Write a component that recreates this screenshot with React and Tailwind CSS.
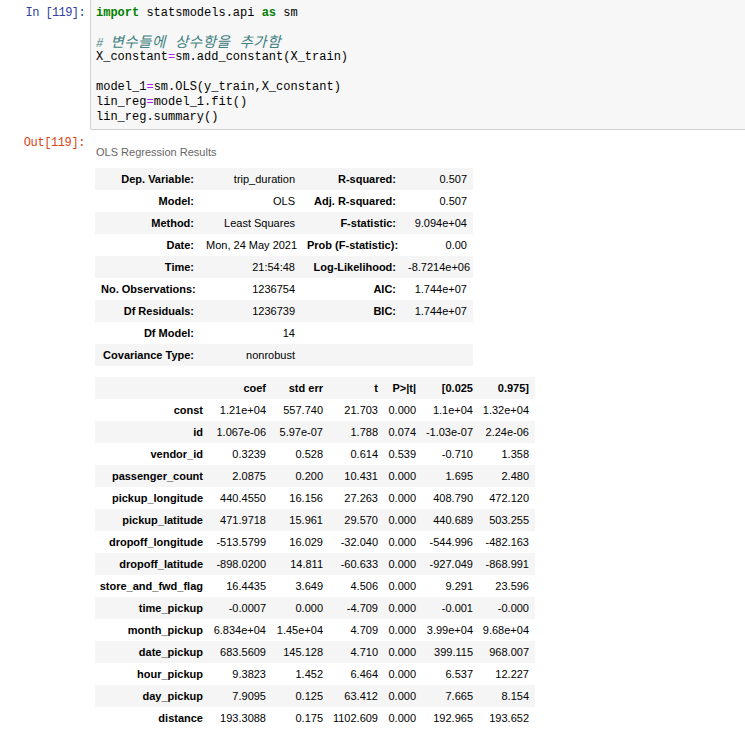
import React from 'react';

const mono = { fontFamily: '"Liberation Mono", "Noto Sans CJK KR", monospace' };

const SUMMARY = [
  ['Dep. Variable:', 'trip_duration', 'R-squared:', '0.507'],
  ['Model:', 'OLS', 'Adj. R-squared:', '0.507'],
  ['Method:', 'Least Squares', 'F-statistic:', '9.094e+04'],
  ['Date:', 'Mon, 24 May 2021', 'Prob (F-statistic):', '0.00'],
  ['Time:', '21:54:48', 'Log-Likelihood:', '-8.7214e+06'],
  ['No. Observations:', '1236754', 'AIC:', '1.744e+07'],
  ['Df Residuals:', '1236739', 'BIC:', '1.744e+07'],
  ['Df Model:', '14', '', ''],
  ['Covariance Type:', 'nonrobust', '', ''],
];

const COEF_HEAD = ['', 'coef', 'std err', 't', 'P>|t|', '[0.025', '0.975]'];

const COEFS = [
  ['const', '1.21e+04', '557.740', '21.703', '0.000', '1.1e+04', '1.32e+04'],
  ['id', '1.067e-06', '5.97e-07', '1.788', '0.074', '-1.03e-07', '2.24e-06'],
  ['vendor_id', '0.3239', '0.528', '0.614', '0.539', '-0.710', '1.358'],
  ['passenger_count', '2.0875', '0.200', '10.431', '0.000', '1.695', '2.480'],
  ['pickup_longitude', '440.4550', '16.156', '27.263', '0.000', '408.790', '472.120'],
  ['pickup_latitude', '471.9718', '15.961', '29.570', '0.000', '440.689', '503.255'],
  ['dropoff_longitude', '-513.5799', '16.029', '-32.040', '0.000', '-544.996', '-482.163'],
  ['dropoff_latitude', '-898.0200', '14.811', '-60.633', '0.000', '-927.049', '-868.991'],
  ['store_and_fwd_flag', '16.4435', '3.649', '4.506', '0.000', '9.291', '23.596'],
  ['time_pickup', '-0.0007', '0.000', '-4.709', '0.000', '-0.001', '-0.000'],
  ['month_pickup', '6.834e+04', '1.45e+04', '4.709', '0.000', '3.99e+04', '9.68e+04'],
  ['date_pickup', '683.5609', '145.128', '4.710', '0.000', '399.115', '968.007'],
  ['hour_pickup', '9.3823', '1.452', '6.464', '0.000', '6.537', '12.227'],
  ['day_pickup', '7.9095', '0.125', '63.412', '0.000', '7.665', '8.154'],
  ['distance', '193.3088', '0.175', '1102.609', '0.000', '192.965', '193.652'],
];

const SUM_W = ['w-[105px]', 'w-[101px]', 'w-[101px]', 'w-[71px]'];
const COEF_W = ['w-[114px]', 'w-[63px]', 'w-[57px]', 'w-[55px]', 'w-[38px]', 'w-[57px]', 'w-[56px]'];

const kw = 'text-[#008000] font-bold';
const op = 'text-[#aa22ff]';

function CodeLine({ children }) {
  return <div className="h-[14.8px] leading-[14.8px] whitespace-pre">{children}</div>;
}

export default function App() {
  return (
    <div className="w-[745px] h-[738px] overflow-hidden bg-white text-black" style={{ fontFamily: '"Liberation Sans", Arial, sans-serif' }}>
      {/* input cell */}
      <div className="flex">
        <div className="w-[90px] shrink-0 pr-[5px] pt-[6px] text-right text-[12px] tracking-[-0.6px] leading-[14.8px] text-[#303f9f]" style={mono}>
          In&nbsp;[119]:
        </div>
        <div className="w-[680px] shrink-0 -mt-px border border-[#cfcfcf] rounded-[2px] bg-[#f7f7f7] pl-[5px] pt-[6px] pb-[5px] text-[12px] text-black" style={mono}>
          <CodeLine><span className={kw}>import</span> statsmodels.api <span className={kw}>as</span> sm</CodeLine>
          <CodeLine> </CodeLine>
          <CodeLine>
            <span className="italic text-[#408080]"># <span className="text-[14.5px] leading-none tracking-[0.5px]">변수들에 상수항을 추가함</span></span>
          </CodeLine>
          <CodeLine>X_constant<span className={op}>=</span>sm.add_constant(X_train)</CodeLine>
          <CodeLine> </CodeLine>
          <CodeLine>model_1<span className={op}>=</span>sm.OLS(y_train,X_constant)</CodeLine>
          <CodeLine>lin_reg<span className={op}>=</span>model_1.fit()</CodeLine>
          <CodeLine>lin_reg.summary()</CodeLine>
        </div>
      </div>

      {/* output */}
      <div className="flex">
        <div className="w-[90px] shrink-0 pr-[5px] pt-[6px] text-right text-[12px] tracking-[-0.4px] leading-[14px] text-[#d84315]" style={mono}>
          Out[119]:
        </div>
        <div className="pl-[5px] pt-[15px] text-[11px]">
          <div className="leading-[14px] text-[#666] pl-px">OLS Regression Results</div>
          <table className="mt-[9px] table-fixed border-collapse w-[378px]">
            <tbody>
              {SUMMARY.map((r, i) => (
                <tr key={i} className={`h-[22px] ${i % 2 === 0 ? 'bg-[#f5f5f5]' : 'bg-white'}`}>
                  {r.map((c, j) => (
                    <td key={j} className={`${SUM_W[j]} pl-[6px] pr-[6px] text-right whitespace-nowrap leading-[22px] ${j % 2 === 0 ? 'font-bold' : ''}`}>
                      {c}
                    </td>
                  ))}
                </tr>
              ))}
            </tbody>
          </table>

          <table className="mt-[11px] table-fixed border-collapse w-[440px]">
            <tbody>
              <tr className="h-[22px] bg-[#f5f5f5]">
                {COEF_HEAD.map((h, j) => (
                  <td key={j} className={`${COEF_W[j]} pr-[6px] text-right font-bold whitespace-nowrap leading-[22px]`}>{h}</td>
                ))}
              </tr>
              {COEFS.map((r, i) => (
                <tr key={r[0]} className={`h-[22px] ${i % 2 === 1 ? 'bg-[#f5f5f5]' : 'bg-white'}`}>
                  {r.map((c, j) => (
                    <td key={j} className={`${COEF_W[j]} pr-[6px] text-right whitespace-nowrap leading-[22px] ${j === 0 ? 'font-bold' : ''}`}>
                      {c}
                    </td>
                  ))}
                </tr>
              ))}
            </tbody>
          </table>
        </div>
      </div>
    </div>
  );
}
